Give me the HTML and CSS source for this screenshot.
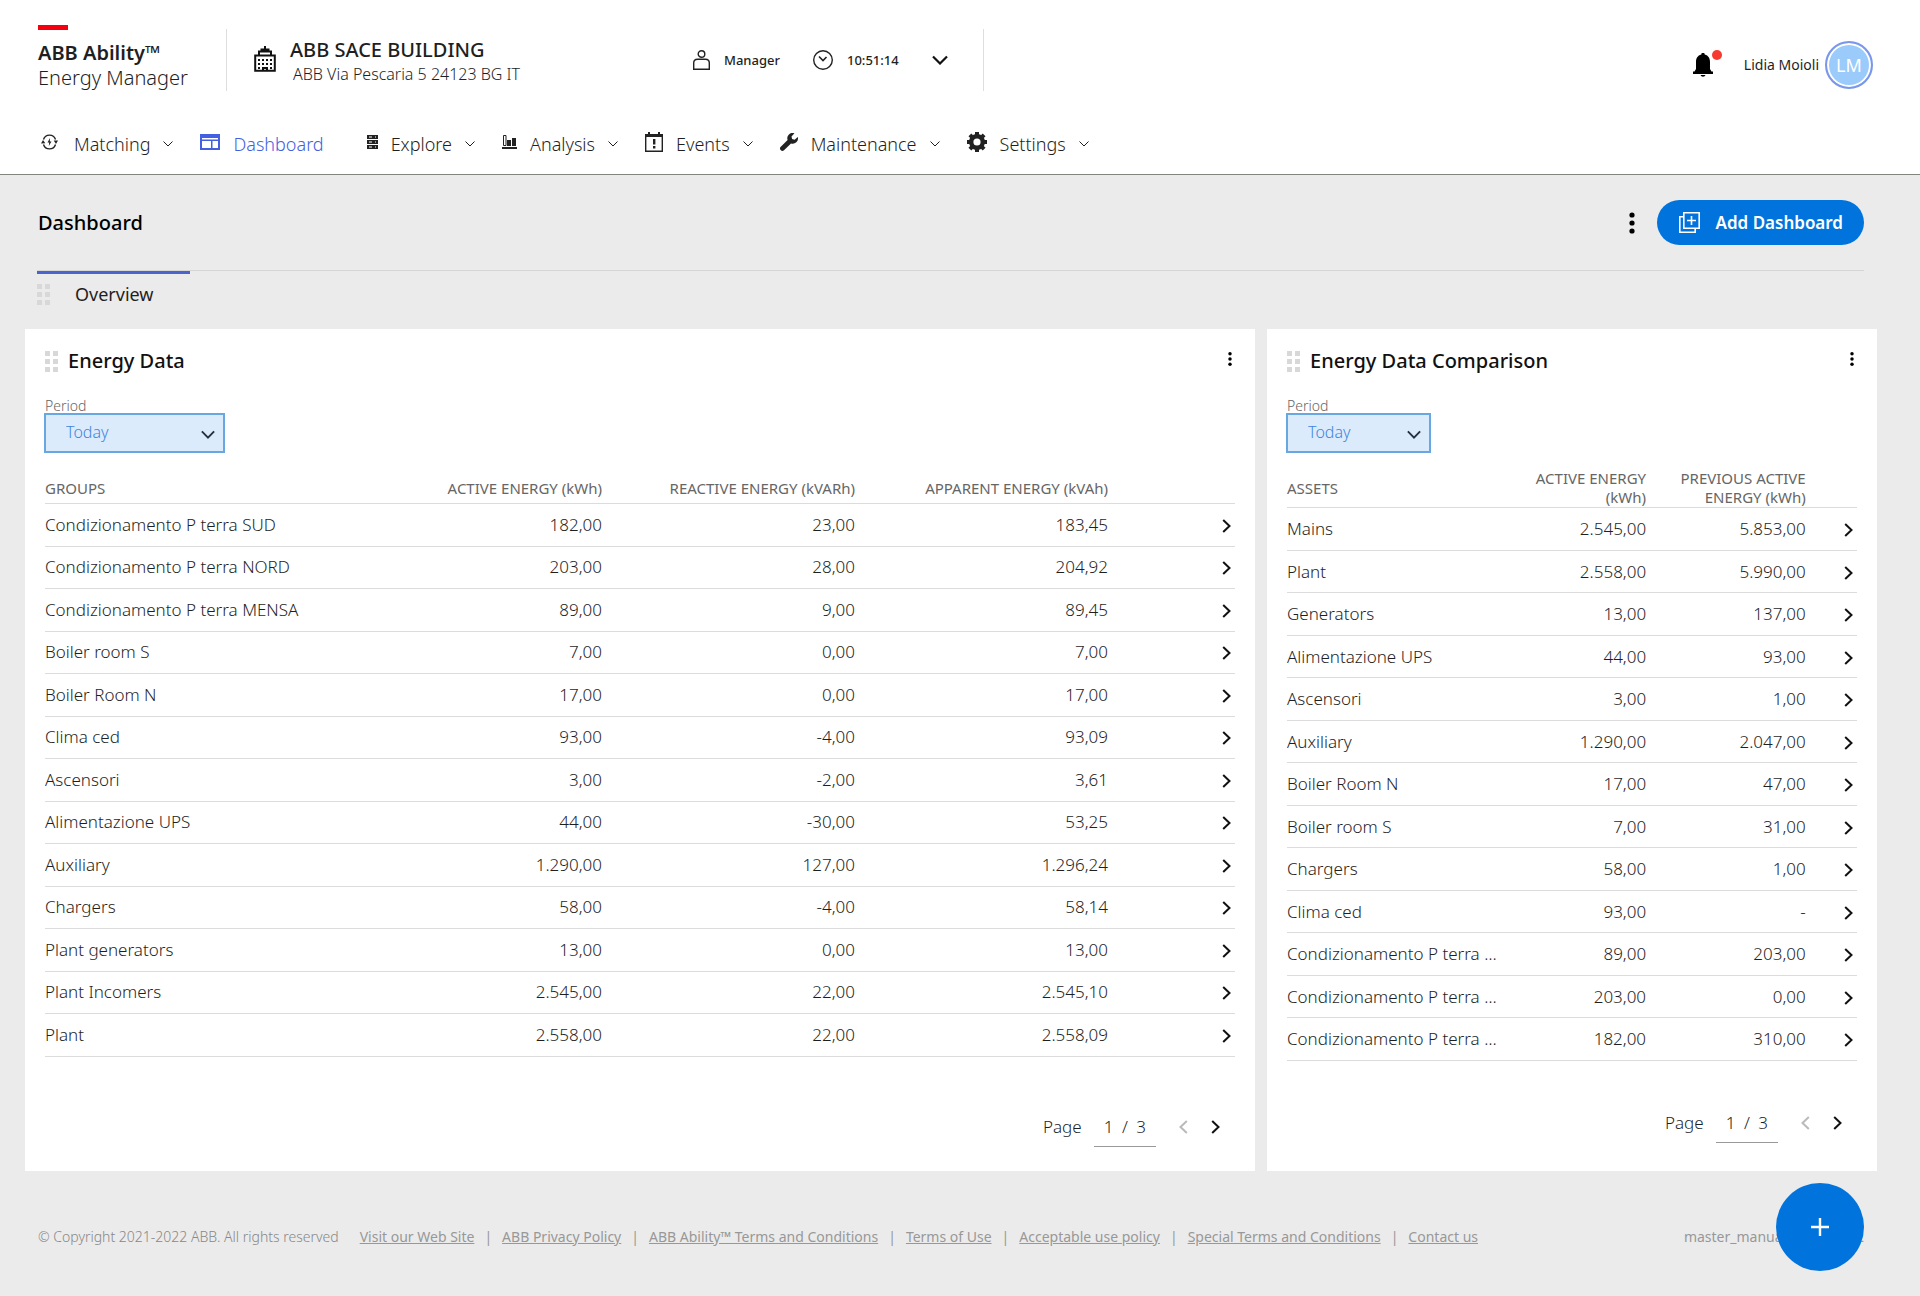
FILE: index.html
```html
<!DOCTYPE html>
<html lang="en">
<head>
<meta charset="utf-8">
<meta name="viewport" content="width=device-width, initial-scale=1">
<title>ABB Ability Energy Manager</title>
<link rel="stylesheet" href="styles.css">
</head>
<body>
<svg class="sprite" aria-hidden="true">
  <symbol id="i-down" viewBox="0 0 10 6"><path d="M.5.5 5 5 9.500.5" fill="none" stroke="currentColor"/></symbol>
  <symbol id="i-down-bold" viewBox="0 0 16 10"><path d="M1 1.500 8 8.500l7-7" fill="none" stroke="currentColor" stroke-width="2.200"/></symbol>
  <symbol id="i-right" viewBox="0 0 9 14"><path d="M1.200 1 7.500 7l-6.300 6" fill="none" stroke="currentColor" stroke-width="2"/></symbol>
  <symbol id="i-left" viewBox="0 0 9 14"><path d="M7.800 1 1.500 7l6.300 6" fill="none" stroke="currentColor" stroke-width="2"/></symbol>
  <symbol id="i-kebab" viewBox="0 0 6 22"><circle cx="3" cy="3" r="2.600"/><circle cx="3" cy="11" r="2.600"/><circle cx="3" cy="19" r="2.600"/></symbol>
  <symbol id="i-drag" viewBox="0 0 13 21"><path d="M0 0h5v5H0zM8 0h5v5H8zM0 8h5v5H0zM8 8h5v5H8zM0 16h5v5H0zM8 16h5v5H8z"/></symbol>
</svg>

<header class="header">
  <div class="topbar">
    <a class="brand" href="#"><span class="brand-bar"></span><strong>ABB Ability™</strong><span>Energy Manager</span></a>
    <div class="site">
      <svg class="site-icon" width="22" height="26" viewBox="0 0 22 26"><path d="M11 0v3M6.500 3.500h9M5 9V5.500h12V9M1.200 24.800V9.500h19.600v15.300z" fill="none" stroke="#111" stroke-width="2"/><path d="M4 13h2v2H4zM8 13h2v2H8zM12 13h2v2h-2zM16 13h2v2h-2zM4 17h2v2H4zM8 17h2v2H8zM12 17h2v2h-2zM16 17h2v2h-2zM4 21h2v2H4zM16 21h2v2h-2zM8 25v-4h6v4h-2v-2h-2v2z" fill="#111"/></svg>
      <div class="site-text"><strong>ABB SACE BUILDING</strong><span>ABB Via Pescaria 5 24123 BG IT</span></div>
    </div>
    <div class="session">
      <span class="session-item"><svg width="17" height="20" viewBox="0 0 17 20" fill="none" stroke="#222" stroke-width="1.400"><circle cx="8.500" cy="4" r="3.300"/><path d="M.7 19.300V13q0-3.800 3.800-3.800h8q3.800 0 3.800 3.800v6.300z"/></svg>Manager</span>
      <span class="session-item"><svg width="20" height="20" viewBox="0 0 20 20" fill="none" stroke="#222" stroke-width="1.400"><circle cx="10" cy="10" r="9.300"/><path d="M6 6.500 10 10.500 13.500 7" stroke-width="1.600"/></svg>10:51:14</span>
      <button class="icon-btn" aria-label="Open session details"><svg width="16" height="10"><use href="#i-down-bold"/></svg></button>
    </div>
    <div class="account">
      <button class="icon-btn bell" aria-label="Notifications"><svg width="20" height="24" viewBox="0 0 20 24"><path d="M8.300 1.500a1.700 1.700 0 0 1 3.400 0C15.500 2.500 17 5.500 17 9v7l1.500 2.500H20V21H0v-2.500h1.500L3 16V9c0-3.500 1.500-6.500 5.300-7.500zM7.500 22h5a2.600 2.300 0 0 1-5 0z"/></svg><span class="dot"></span></button>
      <span class="user-name">Lidia Moioli</span>
      <span class="avatar">LM</span>
    </div>
  </div>
  <nav class="nav">
    <a href="#"><svg class="nav-icon" width="20" height="16" viewBox="0 0 20 16"><path d="M2.500 5.500a6.300 6.300 0 0 1 12 0M2.500 10.500a6.300 6.300 0 0 0 12 0" fill="none" stroke="#222" stroke-width="1.400"/><path d="M0 9.500 2 6l2.300 3.300zM12.700 6.500h4.300L15 10zM9 4 6.500 8.500h1.700L7.800 12l2.700-4.500H8.800z" fill="#222"/></svg>Matching<svg class="caret"><use href="#i-down"/></svg></a>
    <a class="active" href="#"><svg class="nav-icon" width="20" height="16" viewBox="0 0 20 16"><path d="M0 0h20v16H0zM2 4v1.500h16V4zM2 7v7h9V7zM12.500 7v7H18V7z" fill="currentColor" fill-rule="evenodd"/></svg>Dashboard</a>
    <a class="explore" href="#"><svg class="nav-icon" width="11" height="14" viewBox="0 0 11 14"><path d="M0 0h11v4H0zM0 5h11v4H0zM0 10h11v4H0z" fill="#222"/><path d="M2 2h3M2 7h3M2 12h3M8 2h1M8 7h1M8 12h1" stroke="#fff"/></svg>Explore<svg class="caret"><use href="#i-down"/></svg></a>
    <a href="#"><svg class="nav-icon" width="15" height="14" viewBox="0 0 15 14"><path d="M0 12h15v2H0zM5 5h4v6H5zM10 3h4v8h-4z" fill="#222"/><path d="M1.500 10.500V.5H4v10z" fill="none" stroke="#222"/></svg>Analysis<svg class="caret"><use href="#i-down"/></svg></a>
    <a href="#"><svg class="nav-icon" width="18" height="20" viewBox="0 0 18 20"><path d="M.7 3.500h16.600v15.800H.7z" fill="none" stroke="#222" stroke-width="1.400"/><path d="M0 2h18v3H0zM3 0h2v3H3zM13 0h2v3h-2zM8 7h2.400v5.500H8zM8 14h2.400v2.400H8z" fill="#222"/></svg>Events<svg class="caret"><use href="#i-down"/></svg></a>
    <a href="#"><svg class="nav-icon" width="18" height="18" viewBox="0 0 18 18"><path d="M14.500.3A5.300 5.300 0 0 0 7.600 7L.8 13.800a2 2 0 0 0 3.200 3.400L11 10.400A5.300 5.300 0 0 0 17.800 4l-3.200 2.800-2.500-.8-.6-2.400z" fill="#222"/></svg>Maintenance<svg class="caret"><use href="#i-down"/></svg></a>
    <a href="#"><svg class="nav-icon" width="20" height="20" viewBox="0 0 20 20"><circle cx="10" cy="10" r="5.800" fill="none" stroke="#222" stroke-width="4.400"/><path d="M10 0v4M10 16v4M0 10h4M16 10h4M2.900 2.900l2.900 2.900M14.200 14.200l2.900 2.900M2.900 17.100l2.900-2.900M14.200 5.800l2.900-2.900" stroke="#222" stroke-width="4"/></svg>Settings<svg class="caret"><use href="#i-down"/></svg></a>
  </nav>
</header>

<main class="main">
  <div class="page-head">
    <h1>Dashboard</h1>
    <div class="page-actions">
      <button class="icon-btn" aria-label="Dashboard options"><svg width="6" height="22"><use href="#i-kebab"/></svg></button>
      <button class="add-btn"><svg width="21" height="21" viewBox="0 0 21 21" fill="none" stroke="#fff" stroke-width="1.600"><path d="M4.800.8h15.400v15.400H4.800zM4 4.800H.8v15.400h15.400V17M12.500 4v9M8 8.500h9"/></svg>Add Dashboard</button>
    </div>
  </div>
  <div class="tabs"><a class="tab" href="#"><svg class="drag"><use href="#i-drag"/></svg>Overview</a></div>

  <div class="cards">
    <section class="card card-wide">
      <div class="card-head"><svg class="drag"><use href="#i-drag"/></svg><h2>Energy Data</h2><button class="icon-btn" aria-label="Energy Data options"><svg width="4" height="16"><use href="#i-kebab"/></svg></button></div>
      <div class="field"><label for="period-1">Period</label><div class="select"><select id="period-1"><option>Today</option></select><svg width="14" height="9"><use href="#i-down-bold"/></svg></div></div>
      <table>
        <colgroup><col><col class="w-num"><col class="w-num"><col class="w-num"><col class="w-open"></colgroup>
        <thead><tr><th>GROUPS</th><th>ACTIVE ENERGY (kWh)</th><th>REACTIVE ENERGY (kVARh)</th><th>APPARENT ENERGY (kVAh)</th><th></th></tr></thead>
        <tbody id="groups"></tbody>
      </table>
      <div class="pager"><span>Page</span><span class="page-no">1&ensp;/&ensp;3</span><button class="icon-btn" disabled aria-label="Previous page"><svg class="arrow"><use href="#i-left"/></svg></button><button class="icon-btn" aria-label="Next page"><svg class="arrow"><use href="#i-right"/></svg></button></div>
    </section>
    <section class="card card-narrow">
      <div class="card-head"><svg class="drag"><use href="#i-drag"/></svg><h2>Energy Data Comparison</h2><button class="icon-btn" aria-label="Energy Data Comparison options"><svg width="4" height="16"><use href="#i-kebab"/></svg></button></div>
      <div class="field"><label for="period-2">Period</label><div class="select"><select id="period-2"><option>Today</option></select><svg width="14" height="9"><use href="#i-down-bold"/></svg></div></div>
      <table>
        <colgroup><col class="w-name"><col class="w-active"><col class="w-prev"><col></colgroup>
        <thead><tr><th>ASSETS</th><th>ACTIVE ENERGY<br>(kWh)</th><th>PREVIOUS ACTIVE<br>ENERGY (kWh)</th><th></th></tr></thead>
        <tbody id="assets"></tbody>
      </table>
      <div class="pager"><span>Page</span><span class="page-no">1&ensp;/&ensp;3</span><button class="icon-btn" disabled aria-label="Previous page"><svg class="arrow"><use href="#i-left"/></svg></button><button class="icon-btn" aria-label="Next page"><svg class="arrow"><use href="#i-right"/></svg></button></div>
    </section>
  </div>
</main>

<footer class="footer">
  <span class="copy">© Copyright 2021-2022 ABB. All rights reserved</span>
  <ul class="links">
    <li><a href="#">Visit our Web Site</a></li>
    <li><a href="#">ABB Privacy Policy</a></li>
    <li><a href="#">ABB Ability™ Terms and Conditions</a></li>
    <li><a href="#">Terms of Use</a></li>
    <li><a href="#">Acceptable use policy</a></li>
    <li><a href="#">Special Terms and Conditions</a></li>
    <li><a href="#">Contact us</a></li>
  </ul>
  <span class="version">master_manual_2022.03.12</span>
</footer>
<button class="fab" aria-label="Add widget"><svg width="18" height="18" viewBox="0 0 18 18"><path d="M9 0v18M0 9h18" stroke="#fff" stroke-width="2.400"/></svg></button>
<script src="app.js"></script>
</body>
</html>
```
FILE: app.js
```js
const groups = [
  ["Condizionamento P terra SUD", "182,00", "23,00", "183,45"],
  ["Condizionamento P terra NORD", "203,00", "28,00", "204,92"],
  ["Condizionamento P terra MENSA", "89,00", "9,00", "89,45"],
  ["Boiler room S", "7,00", "0,00", "7,00"],
  ["Boiler Room N", "17,00", "0,00", "17,00"],
  ["Clima ced", "93,00", "-4,00", "93,09"],
  ["Ascensori", "3,00", "-2,00", "3,61"],
  ["Alimentazione UPS", "44,00", "-30,00", "53,25"],
  ["Auxiliary", "1.290,00", "127,00", "1.296,24"],
  ["Chargers", "58,00", "-4,00", "58,14"],
  ["Plant generators", "13,00", "0,00", "13,00"],
  ["Plant Incomers", "2.545,00", "22,00", "2.545,10"],
  ["Plant", "2.558,00", "22,00", "2.558,09"]
];
const assets = [
  ["Mains", "2.545,00", "5.853,00"],
  ["Plant", "2.558,00", "5.990,00"],
  ["Generators", "13,00", "137,00"],
  ["Alimentazione UPS", "44,00", "93,00"],
  ["Ascensori", "3,00", "1,00"],
  ["Auxiliary", "1.290,00", "2.047,00"],
  ["Boiler Room N", "17,00", "47,00"],
  ["Boiler room S", "7,00", "31,00"],
  ["Chargers", "58,00", "1,00"],
  ["Clima ced", "93,00", "-"],
  ["Condizionamento P terra …", "89,00", "203,00"],
  ["Condizionamento P terra …", "203,00", "0,00"],
  ["Condizionamento P terra …", "182,00", "310,00"]
];
function fill(id, rows) {
  document.getElementById(id).innerHTML = rows.map(cells =>
    `<tr>${cells.map(c => `<td>${c}</td>`).join("")}<td><button class="icon-btn" aria-label="Open ${cells[0]}"><svg class="arrow"><use href="#i-right"/></svg></button></td></tr>`
  ).join("");
}
fill("groups", groups);
fill("assets", assets);
```
FILE: styles.css
```css
* { box-sizing: border-box; }
body {
  margin: 0;
  min-height: 100vh;
  background: #ebebeb;
  color: #1f1f1f;
  font: 300 16px/20px "Noto Sans", sans-serif;
}
h1, h2, ul { margin: 0; padding: 0; }
a { color: inherit; text-decoration: none; }
svg { display: block; flex: none; }
.sprite { position: absolute; width: 0; height: 0; }
.icon-btn {
  display: flex;
  padding: 0;
  border: 0;
  background: none;
  color: #111;
  cursor: pointer;
}
.icon-btn:disabled { color: #bababa; }

.header { background: #fff; border-bottom: 1px solid #80857d; }
.topbar { display: flex; align-items: center; height: 120px; padding: 0 47px 0 38px; }
.brand {
  display: flex;
  flex-direction: column;
  width: 188px;
  padding-bottom: 5px;
  font-size: 20px;
  line-height: 25px;
}
.brand strong { font-weight: 600; }
.brand-bar { width: 30px; height: 5px; margin-bottom: 10px; background: #f5000f; }
.site {
  display: flex;
  gap: 14px;
  width: 439px;
  height: 62px;
  padding-left: 27px;
  border-left: 1px solid #dedede;
  line-height: 24px;
}
.site-icon { margin-top: 17px; }
.site-text { display: flex; flex-direction: column; padding-top: 9px; }
.site-text strong { font-weight: 500; font-size: 20px; }
.site-text span { padding-left: 3px; }
.session {
  display: flex;
  align-items: center;
  gap: 33px;
  width: 319px;
  height: 62px;
  padding-left: 28px;
  border-right: 1px solid #dedede;
  font-size: 13px;
  font-weight: 500;
}
.session-item { display: flex; align-items: center; gap: 14px; }
.account { display: flex; align-items: center; margin-left: auto; padding-top: 10px; font-size: 14px; font-weight: 400; }
.bell { position: relative; margin-right: 31px; }
.dot { position: absolute; top: -3px; left: 19px; width: 10px; height: 10px; border-radius: 50%; background: #f63a32; }
.user-name { margin-right: 6px; }
.avatar {
  display: grid;
  place-items: center;
  width: 48px;
  height: 48px;
  border: 2px solid #7b96ea;
  border-radius: 50%;
  background: #9acbfb;
  box-shadow: inset 0 0 0 2px #fff;
  color: #fff;
  font-size: 18px;
}
.nav { display: flex; height: 54px; padding: 0 41px; gap: 27px; font-size: 18px; }
.nav a { display: flex; align-items: center; gap: 13px; height: 48px; }
.nav-icon { margin-bottom: 4px; }
.nav .active { color: #4460e0; }
.nav .explore { margin-left: 16px; }
.caret { width: 10px; height: 6px; }

.main { padding: 25px 43px 0 25px; }
.page-head { display: flex; align-items: center; justify-content: space-between; height: 45px; margin: 0 13px; }
h1 { font-size: 20px; font-weight: 500; line-height: 24px; color: #000; }
.page-actions { display: flex; align-items: center; gap: 22px; }
.add-btn {
  display: flex;
  align-items: center;
  gap: 16px;
  height: 45px;
  padding: 0 21px 0 22px;
  border: 0;
  border-radius: 23px;
  background: #0074dc;
  color: #fff;
  font: 600 17px/24px "Noto Sans", sans-serif;
}
.tabs { margin: 25px 13px 0 12px; border-top: 1px solid #d6d6d6; }
.tab {
  display: flex;
  align-items: center;
  gap: 25px;
  width: 153px;
  height: 43px;
  border-top: 3px solid #4a64cf;
  font-size: 18px;
  font-weight: 400;
}
.drag { width: 13px; height: 21px; fill: #d8d8d8; }

.cards { display: grid; grid-template-columns: 1230fr 610fr; gap: 12px; margin-top: 15px; }
.card { display: flex; flex-direction: column; min-width: 0; padding: 20px 20px 24px; background: #fff; }
.card-head { display: flex; align-items: center; gap: 10px; height: 24px; }
h2 { font-size: 20px; font-weight: 500; line-height: 24px; color: #111; }
.card-head .icon-btn { margin: 0 3px 4px auto; }
.field { display: flex; flex-direction: column; margin: 25px 0 0 -1px; }
.field label { padding-left: 1px; color: #666; font-size: 14px; line-height: 15px; }
.select { position: relative; width: 181px; }
.card-narrow .select { width: 145px; }
.select select {
  appearance: none;
  display: block;
  width: 100%;
  height: 40px;
  padding: 0 20px 2px;
  border: 2px solid #69a7e3;
  border-radius: 0;
  background: #dcebfb;
  color: #4086dd;
  font: 300 16px/20px "Noto Sans", sans-serif;
}
.select svg { position: absolute; right: 10px; top: 17px; color: #25313e; pointer-events: none; }

table { width: 100%; margin-top: 14px; border-collapse: collapse; table-layout: fixed; font-size: 17px; }
.w-num { width: 253px; }
.w-open { width: 127px; }
.w-name { width: 38%; }
.w-active { width: 25%; }
.w-prev { width: 28%; }
th, td { padding: 0; border-bottom: 1px solid #dcdcdc; text-align: right; white-space: nowrap; }
th { height: 36px; padding-top: 2px; color: #666; font-size: 15px; font-weight: 400; line-height: 19px; }
.card-wide th { padding-top: 8px; }
th:first-child, td:first-child { text-align: left; }
td { height: 42px; }
tr:nth-child(odd) td { height: 43px; }
td .icon-btn { margin: 2px 4px 0 auto; }
.arrow { width: 9px; height: 14px; }
.pager { display: flex; align-items: center; gap: 23px; margin-top: 50px; padding-right: 15px; justify-content: flex-end; font-size: 17px; }
.card-narrow .pager { margin-top: 42px; }
.page-no { height: 40px; margin-left: -11px; padding: 10px 10px 0; border-bottom: 1px solid #999; }

.footer { display: flex; align-items: center; height: 126px; padding: 6px 56px 0 38px; color: #989898; font-size: 14px; font-weight: 400; }
.copy { font-weight: 300; color: #888; }
.links { display: flex; margin-left: 21px; list-style: none; }
.links li + li::before { content: "|"; margin: 0 10px; }
.links a { text-decoration: underline; }
.version { margin-left: auto; }
.fab {
  position: fixed;
  right: 56px;
  bottom: 25px;
  display: grid;
  place-items: center;
  width: 88px;
  height: 88px;
  padding: 0;
  border: 0;
  border-radius: 50%;
  background: #0074dc;
}
```
